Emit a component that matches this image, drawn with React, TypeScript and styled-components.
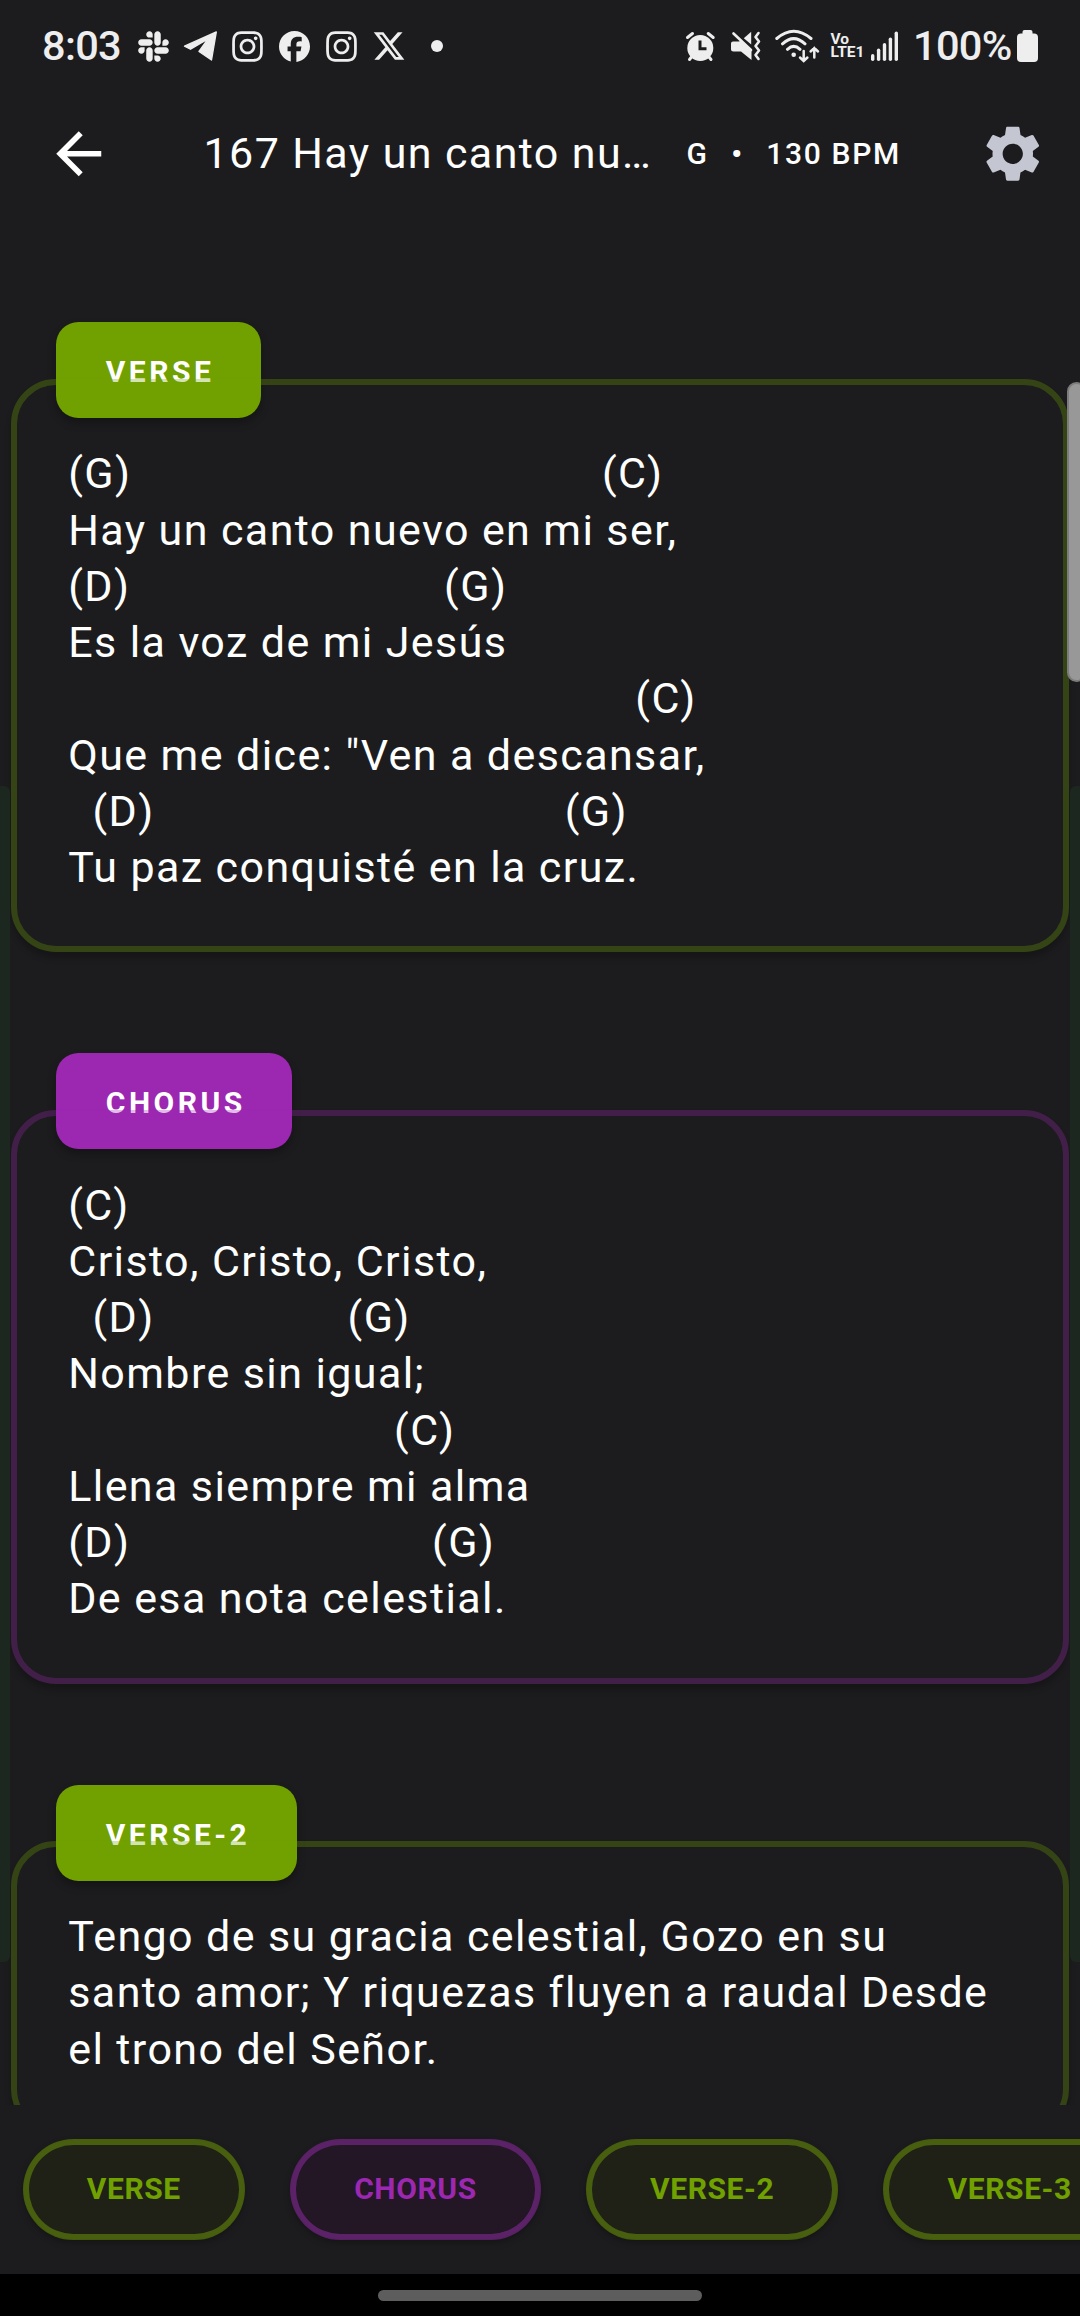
import React from 'react';
import styled, { createGlobalStyle } from 'styled-components';
import { FaSlack, FaInstagram } from 'react-icons/fa';
import { FaXTwitter, FaFacebook } from 'react-icons/fa6';
import { MdArrowBack, MdSettings } from 'react-icons/md';

type Tone = 'green' | 'purple';
const rgb: Record<Tone, string> = { green: '113, 161, 0', purple: '156, 39, 176' };

const GlobalStyle = createGlobalStyle`
  * { box-sizing: border-box; }
  body { margin: 0; background: #1c1c1e; }
`;

const Screen = styled.div`
  position: relative;
  display: flex;
  flex-direction: column;
  width: 1080px;
  height: 2316px;
  overflow: hidden;
  background: #1c1c1e;
  color: #fff;
  font-family: Roboto, 'Noto Sans', sans-serif;
`;

const StatusBar = styled.div`
  display: flex;
  justify-content: space-between;
  align-items: center;
  height: 93px;
  padding: 0 42px 1px;
  color: #eee;
  flex: none;
`;

const StatusGroup = styled.div`
  display: flex;
  align-items: center;
`;

const Slot = styled.span<{ $width: number; $center?: boolean }>`
  display: flex;
  align-items: center;
  justify-content: ${(p) => (p.$center ? 'center' : 'flex-start')};
  width: ${(p) => p.$width}px;
  flex: none;
  svg { display: block; flex: none; }
`;

const StatusText = styled.span`
  font-size: 41.5px;
  font-weight: 500;
  line-height: 50px;
  padding-bottom: 1px;
  letter-spacing: -0.7px;
`;

const Dot = styled.span`
  width: 12px;
  height: 12px;
  margin-left: 2px;
  border-radius: 50%;
  background: #eee;
`;

const AppBar = styled.header`
  display: flex;
  align-items: center;
  height: 123px;
  padding: 0 34px 1px 45px;
  flex: none;
  svg { display: block; flex: none; }
`;

const Title = styled.h1`
  width: 455px;
  flex: none;
  margin: -2px 0 0 91px;
  white-space: nowrap;
  font-size: 43px;
  font-weight: 400;
  line-height: 56px;
  letter-spacing: 1.4px;
`;

const Meta = styled.div`
  display: flex;
  gap: 22.5px;
  margin-left: 28px;
  margin-right: auto;
  font-size: 30px;
  font-weight: 500;
  line-height: 40px;
  letter-spacing: 1.7px;
  white-space: nowrap;
`;

const Bullet = styled.span`
  font-weight: 700;
`;

const SongBody = styled.main`
  display: flex;
  flex-direction: column;
  gap: 101px;
  height: 1889px;
  flex: none;
  padding: 106px 11.25px 0;
  overflow: hidden;
`;

const Section = styled.section`
  display: flex;
  flex-direction: column;
  flex: none;
`;

const Chip = styled.div<{ $tone: Tone }>`
  align-self: flex-start;
  height: 96px;
  margin: 0 0 -39.4px 45px;
  padding: 1px 46.5px 0 49.5px;
  border-radius: 22.5px;
  background: rgb(${(p) => rgb[p.$tone]});
  box-shadow: 0 5px 9px rgba(0, 0, 0, 0.28);
  font-size: 30px;
  font-weight: 700;
  line-height: 98px;
  letter-spacing: 3.5px;
`;

const Card = styled.div<{ $tone: Tone }>`
  position: relative;
  padding: 60.8px 58px 50.9px 51px;
  border: 6px solid rgba(${(p) => rgb[p.$tone]}, 0.3);
  border-radius: 45px;
  box-shadow: 0 6px 6px rgba(0, 0, 0, 0.22);
`;

const Lyrics = styled.p`
  margin: 0;
  white-space: pre-wrap;
  font-size: 43px;
  line-height: 56.25px;
  letter-spacing: 1.4px;
`;

const JumpBar = styled.nav`
  display: flex;
  align-items: center;
  gap: 45px;
  height: 169px;
  padding: 0 22.5px;
  overflow: hidden;
  flex: none;
`;

const JumpButton = styled.button<{ $tone: Tone }>`
  flex: none;
  height: 101.25px;
  padding: 0 58px 2px 58.3px;
  border: 6px solid rgba(${(p) => rgb[p.$tone]}, 0.5);
  border-radius: 51px;
  background: ${(p) => (p.$tone === 'green' ? '#1f2116' : '#231625')};
  background-clip: padding-box;
  box-shadow: 0 3px 6px rgba(0, 0, 0, 0.25);
  color: rgb(${(p) => rgb[p.$tone]});
  font: 700 30px/40px Roboto, 'Noto Sans', sans-serif;
  letter-spacing: 0.6px;
`;

const NavigationBar = styled.footer`
  display: flex;
  justify-content: center;
  align-items: center;
  flex: 1;
  padding-top: 1px;
  background: #000;
`;

const HomeHandle = styled.div`
  width: 324px;
  height: 11px;
  border-radius: 5.5px;
  background: #5d5d5d;
`;

const EdgeGlow = styled.div<{ $side: 'left' | 'right' }>`
  position: absolute;
  top: 786px;
  ${(p) => p.$side}: 0;
  width: 10px;
  height: 1176px;
  border-radius: ${(p) => (p.$side === 'left' ? '0 6px 6px 0' : '6px 0 0 6px')};
  background: #1c271f;
`;

const ScrollThumb = styled.div`
  position: absolute;
  top: 382px;
  right: -6px;
  width: 19px;
  height: 300px;
  border: 2px solid #7c7c7c;
  border-radius: 10px;
  background: #989898;
`;

const NetworkLabel = styled.span`
  display: flex;
  flex-direction: column;
  font-size: 15.5px;
  font-weight: 700;
  line-height: 13.5px;
`;

const TelegramIcon = () => (
  <svg width="35" height="32" viewBox="0 0 35 32" fill="#eee" stroke="#eee" strokeWidth="1.4" strokeLinejoin="round">
    <path d="M1.500 16.200 33.300 2 28.500 30 16 21.500 25 9 7.500 19.200z" />
  </svg>
);

const AlarmIcon = () => (
  <svg width="31" height="31" viewBox="0 0 31 31" fill="none" stroke="#eee">
    <circle cx="15.300" cy="17" r="13" fill="#eee" stroke="none" />
    <path d="M2.500 6.500 7.500 2.500M28.200 6.500 23.200 2.500" strokeWidth="3" strokeLinecap="round" />
    <path d="M6.500 26l-2 2.500M24 26l2 2.500" strokeWidth="3" strokeLinecap="round" />
    <path d="M15 9.500v8.200h6.500" stroke="#1c1c1e" strokeWidth="3" />
  </svg>
);

const MutedIcon = () => (
  <svg width="31" height="30" viewBox="0 0 31 30" fill="#eee">
    <path d="M1 12.500Q1 10.500 3 10.500H9L11 9.500 21.500 18.500V29L11 20.500H3.500Q1 20.500 1 18z" />
    <path d="M13.800 7.200 21.200.8V13.500z" />
    <path d="M3.500 2.500 21 19" stroke="#eee" strokeWidth="2.600" strokeLinecap="round" />
    <path d="M28.500 2 25.500 6l3.500 4.500-3.500 4.500 3.500 4.500-3.500 4.500 3 4" fill="none" stroke="#eee" strokeWidth="2.600" strokeLinecap="round" strokeLinejoin="round" />
  </svg>
);

const WifiIcon = () => (
  <svg width="46" height="34" viewBox="0 0 46 34" fill="none" stroke="#eee" strokeWidth="3" strokeLinecap="round">
    <path d="M1.800 9.500Q18.700-5 36 9.500M7.500 14.800Q18.700 4.500 30 14.800M12.500 20.300Q18.700 14.500 25 20.300" />
    <circle cx="18.700" cy="25.800" r="2.300" fill="#eee" stroke="none" />
    <path d="M28.700 22v9.800M25 28.500l3.700 3.500 3.700-3.500M39.300 28.500V19M35.600 22.500l3.700-3.500 3.700 3.500" strokeWidth="2.500" />
  </svg>
);

const SignalIcon = () => (
  <svg width="28" height="30" viewBox="0 0 28 30" fill="#eee">
    {[7, 12.5, 18, 23.5, 29.5].map((h, i) => (
      <rect key={h} x={i * 5.9} y={30 - h} width="3.400" height={h} rx="1.700" />
    ))}
  </svg>
);

const BatteryIcon = () => (
  <svg width="21" height="32" viewBox="0 0 21 32" fill="#eee">
    <rect x="5.500" width="10" height="8" rx="2" />
    <rect y="3.500" width="21" height="28.500" rx="4" />
  </svg>
);

const gap = (n: number) => ' '.repeat(n);

const sections: { name: string; tone: Tone; lines: string[] }[] = [
  {
    name: 'VERSE',
    tone: 'green',
    lines: [
      `(G)${gap(39)}(C)`,
      'Hay un canto nuevo en mi ser,',
      `(D)${gap(26)}(G)`,
      'Es la voz de mi Jesús',
      `${gap(47)}(C)`,
      'Que me dice: "Ven a descansar,',
      `${gap(2)}(D)${gap(34)}(G)`,
      'Tu paz conquisté en la cruz.',
    ],
  },
  {
    name: 'CHORUS',
    tone: 'purple',
    lines: [
      '(C)',
      'Cristo, Cristo, Cristo,',
      `${gap(2)}(D)${gap(16)}(G)`,
      'Nombre sin igual;',
      `${gap(27)}(C)`,
      'Llena siempre mi alma',
      `(D)${gap(25)}(G)`,
      'De esa nota celestial.',
    ],
  },
  {
    name: 'VERSE-2',
    tone: 'green',
    lines: ['Tengo de su gracia celestial, Gozo en su santo amor; Y riquezas fluyen a raudal Desde el trono del Señor.'],
  },
];

const jumps: { name: string; tone: Tone }[] = [
  { name: 'VERSE', tone: 'green' },
  { name: 'CHORUS', tone: 'purple' },
  { name: 'VERSE-2', tone: 'green' },
  { name: 'VERSE-3', tone: 'green' },
];

export default function App() {
  return (
    <Screen>
      <GlobalStyle />
      <StatusBar>
        <StatusGroup>
          <Slot $width={88}>
            <StatusText>8:03</StatusText>
          </Slot>
          <Slot $width={47} $center>
            <FaSlack size={35} />
          </Slot>
          <Slot $width={47} $center>
            <TelegramIcon />
          </Slot>
          <Slot $width={47} $center>
            <FaInstagram size={35} />
          </Slot>
          <Slot $width={47} $center>
            <FaFacebook size={31} />
          </Slot>
          <Slot $width={47} $center>
            <FaInstagram size={35} />
          </Slot>
          <Slot $width={47} $center>
            <FaXTwitter size={34} />
          </Slot>
          <Slot $width={47} $center>
            <Dot />
          </Slot>
        </StatusGroup>
        <StatusGroup>
          <Slot $width={45}>
            <AlarmIcon />
          </Slot>
          <Slot $width={45}>
            <MutedIcon />
          </Slot>
          <Slot $width={55.5}>
            <WifiIcon />
          </Slot>
          <Slot $width={40.5}>
            <NetworkLabel>
              <span>Vo</span>
              <span>LTE1</span>
            </NetworkLabel>
          </Slot>
          <Slot $width={42}>
            <SignalIcon />
          </Slot>
          <Slot $width={104}>
            <StatusText>100%</StatusText>
          </Slot>
          <BatteryIcon />
        </StatusGroup>
      </StatusBar>
      <AppBar>
        <MdArrowBack size={67.5} />
        <Title>167 Hay un canto nu…</Title>
        <Meta>
          <span>G</span>
          <Bullet>•</Bullet>
          <span>130 BPM</span>
        </Meta>
        <MdSettings size={67.5} color="#c4c7d1" />
      </AppBar>
      <SongBody>
        {sections.map((s) => (
          <Section key={s.name}>
            <Chip $tone={s.tone}>{s.name}</Chip>
            <Card $tone={s.tone}>
              <Lyrics>{s.lines.join('\n')}</Lyrics>
            </Card>
          </Section>
        ))}
      </SongBody>
      <JumpBar>
        {jumps.map((j) => (
          <JumpButton key={j.name} $tone={j.tone}>
            {j.name}
          </JumpButton>
        ))}
      </JumpBar>
      <NavigationBar>
        <HomeHandle />
      </NavigationBar>
      <EdgeGlow $side="left" />
      <EdgeGlow $side="right" />
      <ScrollThumb />
    </Screen>
  );
}
